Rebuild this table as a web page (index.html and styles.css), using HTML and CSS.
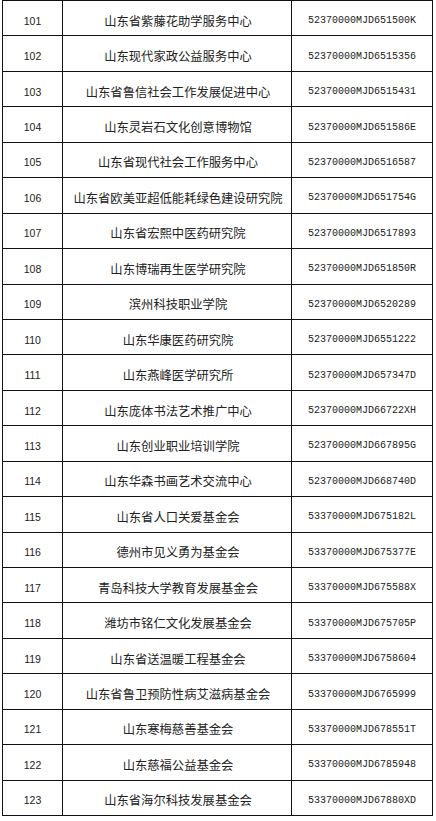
FILE: index.html
```html
<!DOCTYPE html>
<html lang="zh-CN">
<head>
<meta charset="utf-8">
<title>名单</title>
<link rel="stylesheet" href="styles.css">
</head>
<body>
<div class="table">
  <div class="cell num">101</div><div class="cell name">山东省紫藤花助学服务中心</div><div class="cell code">52370000MJD651500K</div>
  <div class="cell num">102</div><div class="cell name">山东现代家政公益服务中心</div><div class="cell code">52370000MJD6515356</div>
  <div class="cell num">103</div><div class="cell name">山东省鲁信社会工作发展促进中心</div><div class="cell code">52370000MJD6515431</div>
  <div class="cell num">104</div><div class="cell name">山东灵岩石文化创意博物馆</div><div class="cell code">52370000MJD651586E</div>
  <div class="cell num">105</div><div class="cell name">山东省现代社会工作服务中心</div><div class="cell code">52370000MJD6516587</div>
  <div class="cell num">106</div><div class="cell name">山东省欧美亚超低能耗绿色建设研究院</div><div class="cell code">52370000MJD651754G</div>
  <div class="cell num">107</div><div class="cell name">山东省宏熙中医药研究院</div><div class="cell code">52370000MJD6517893</div>
  <div class="cell num">108</div><div class="cell name">山东博瑞再生医学研究院</div><div class="cell code">52370000MJD651850R</div>
  <div class="cell num">109</div><div class="cell name">滨州科技职业学院</div><div class="cell code">52370000MJD6520289</div>
  <div class="cell num">110</div><div class="cell name">山东华康医药研究院</div><div class="cell code">52370000MJD6551222</div>
  <div class="cell num">111</div><div class="cell name">山东燕峰医学研究所</div><div class="cell code">52370000MJD657347D</div>
  <div class="cell num">112</div><div class="cell name">山东庞体书法艺术推广中心</div><div class="cell code">52370000MJD66722XH</div>
  <div class="cell num">113</div><div class="cell name">山东创业职业培训学院</div><div class="cell code">52370000MJD667895G</div>
  <div class="cell num">114</div><div class="cell name">山东华森书画艺术交流中心</div><div class="cell code">52370000MJD668740D</div>
  <div class="cell num">115</div><div class="cell name">山东省人口关爱基金会</div><div class="cell code">53370000MJD675182L</div>
  <div class="cell num">116</div><div class="cell name">德州市见义勇为基金会</div><div class="cell code">53370000MJD675377E</div>
  <div class="cell num">117</div><div class="cell name">青岛科技大学教育发展基金会</div><div class="cell code">53370000MJD675588X</div>
  <div class="cell num">118</div><div class="cell name">潍坊市铭仁文化发展基金会</div><div class="cell code">53370000MJD675705P</div>
  <div class="cell num">119</div><div class="cell name">山东省送温暖工程基金会</div><div class="cell code">53370000MJD6758604</div>
  <div class="cell num">120</div><div class="cell name">山东省鲁卫预防性病艾滋病基金会</div><div class="cell code">53370000MJD6765999</div>
  <div class="cell num">121</div><div class="cell name">山东寒梅慈善基金会</div><div class="cell code">53370000MJD678551T</div>
  <div class="cell num">122</div><div class="cell name">山东慈福公益基金会</div><div class="cell code">53370000MJD6785948</div>
  <div class="cell num">123</div><div class="cell name">山东省海尔科技发展基金会</div><div class="cell code">53370000MJD67880XD</div>
</div>
</body>
</html>
```
FILE: styles.css
```css
html, body {
  margin: 0;
  padding: 0;
  background: #ffffff;
}
body {
  width: 436px;
  height: 821px;
  overflow: hidden;
}
.table {
  margin-left: 2px;
  width: 431px;
  box-sizing: border-box;
  display: grid;
  grid-template-columns: 60px 229px 141px;
  grid-auto-rows: 35.45px;
  border-left: 1px solid #111;
  border-top: 1px solid #111;
}
.cell {
  box-sizing: border-box;
  border-right: 1px solid #111;
  border-bottom: 1px solid #111;
  display: flex;
  align-items: center;
  justify-content: center;
  padding-top: 5px;
  color: #222;
  white-space: nowrap;
}
.num {
  font-family: "Liberation Sans", Arial, sans-serif;
  font-size: 10.5px;
}
.name {
  font-family: "Noto Sans CJK SC", "Noto Sans", sans-serif;
  font-size: 12.3px;
  padding-left: 2px;
}
.code {
  font-family: "Liberation Mono", "Courier New", monospace;
  font-size: 10px;
}
```
